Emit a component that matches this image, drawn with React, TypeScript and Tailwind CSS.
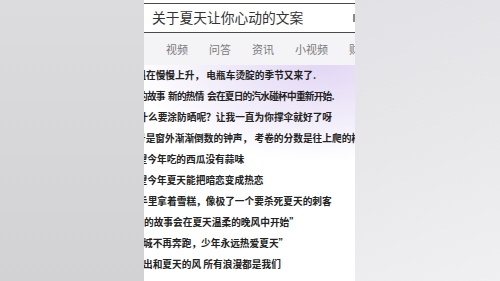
import React from "react";

const lines: { text: string; cls: string }[] = [
  { text: "温在慢慢上升，  电瓶车烫腚的季节又来了.", cls: "ml-[-7.7px]" },
  { text: "的故事 新的热情 会在夏日的汽水碰杯中重新开始.", cls: "ml-[-6px] tracking-[-0.8px] [word-spacing:2px]" },
  { text: "什么要涂防晒呢？让我一直为你撑伞就好了呀", cls: "ml-[-5.7px]" },
  { text: "号是窗外渐渐倒数的钟声， 考卷的分数是往上爬的样子", cls: "ml-[-8px]" },
  { text: "望今年吃的西瓜没有蒜味", cls: "ml-[-6.4px]" },
  { text: "望今年夏天能把暗恋变成热恋", cls: "ml-[-6.4px]" },
  { text: "手里拿着雪糕，像极了一个要杀死夏天的刺客", cls: "ml-[-6px]" },
  { text: "的故事会在夏天温柔的晚风中开始”", cls: "ml-[0px]" },
  { text: "城不再奔跑，少年永远热爱夏天”", cls: "ml-[-1px]" },
  { text: "出和夏天的风 所有浪漫都是我们", cls: "ml-[-1px]" },
];

const tabs = ["视频", "问答", "资讯", "小视频", "财经"];

export default function App() {
  return (
    <div className="flex h-[281px] w-[500px] overflow-hidden font-['Noto_Sans_CJK_SC',sans-serif]">
      <div className="w-[144px] shrink-0 bg-[linear-gradient(180deg,#dcdcde_0%,#d6d6d8_60%,#d2d2d4_100%)]" />
      <div className="flex w-[211px] shrink-0 flex-col overflow-hidden bg-white">
        <div className="pt-[3px]">
          <div className="flex h-[30px] items-center justify-between border-y border-[#4a4a4a] pl-[8px]">
            <span className="whitespace-nowrap text-[13.75px] leading-none text-[#333]">
              关于夏天让你心动的文案
            </span>
            <span className="h-[8px] w-[2px] bg-[#8a8a8a]" />
          </div>
        </div>
        <div className="flex h-[32px] items-center gap-[21px] whitespace-nowrap bg-[#f4f4f6] pl-[22px] text-[11px] leading-none text-[#7a7a7a]">
          {tabs.map((t) => (
            <span key={t}>{t}</span>
          ))}
        </div>
        <div className="flex-1 bg-[radial-gradient(ellipse_90%_45%_at_85%_0%,#e2d7f5_0%,#eee8f8_45%,#ffffff_100%)]">
          {lines.map((l, i) => (
            <div
              key={i}
              className={`h-[21px] whitespace-nowrap text-[9.7px] font-semibold leading-[21px] text-[#222] ${l.cls}`}
            >
              {l.text}
            </div>
          ))}
        </div>
      </div>
      <div className="flex-1 bg-[linear-gradient(160deg,#e2e2e6_0%,#e8e8eb_50%,#f0f0f2_100%)]" />
    </div>
  );
}
